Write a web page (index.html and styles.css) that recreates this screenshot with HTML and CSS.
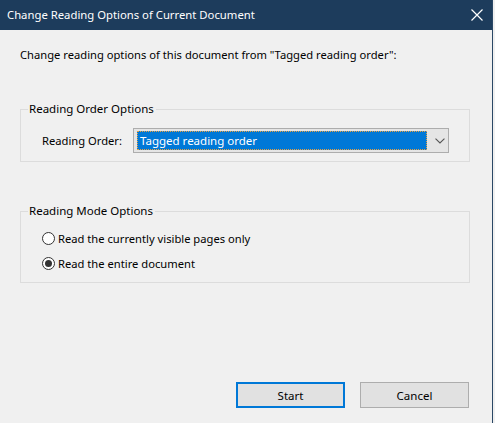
FILE: index.html
```html
<!DOCTYPE html>
<html>
<head>
<meta charset="utf-8">
<link rel="stylesheet" href="styles.css">
</head>
<body>
<div class="window">
  <div class="titlebar">
    <span class="title">Change Reading Options of Current Document</span>
    <svg class="close" width="12" height="12" viewBox="0 0 12 12"><path d="M0.5 0.5 L11.5 11.5 M11.5 0.5 L0.5 11.5" stroke="#fff" stroke-width="1.2" fill="none"/></svg>
  </div>
  <div class="content">
    <p class="intro">Change reading options of this document from "Tagged reading order":</p>
    <div class="group group-order">
      <span class="legend">Reading Order Options</span>
      <div class="row">
        <span class="label">Reading Order:</span>
        <div class="select">
          <div class="selected"><span>Tagged reading order</span></div>
          <svg class="chev" width="10" height="6" viewBox="0 0 10 6"><path d="M0.5 0.5 L5 5 L9.5 0.5" stroke="#555" stroke-width="1.1" fill="none"/></svg>
        </div>
      </div>
    </div>
    <div class="group group-mode">
      <span class="legend">Reading Mode Options</span>
      <label class="radio first"><span class="dot"></span>Read the currently visible pages only</label>
      <label class="radio"><span class="dot checked"></span>Read the entire document</label>
    </div>
    <div class="buttons">
      <button class="btn primary">Start</button>
      <button class="btn">Cancel</button>
    </div>
  </div>
</div>
</body>
</html>
```

FILE: styles.css
```css
html, body {
  margin: 0;
  padding: 0;
  background: #f0f0f0;
}
body {
  font-family: "Noto Sans", "Open Sans", sans-serif;
  font-size: 11.2px;
  color: #000;
}
.window {
  width: 492px;
  height: 423px;
  border-right: 1px solid #2a4866;
  background: #f0f0f0;
  display: flex;
  flex-direction: column;
}
.titlebar {
  height: 30px;
  flex: none;
  background: #1d3c5c;
  display: flex;
  align-items: center;
  justify-content: space-between;
  padding: 0 9px 0 7px;
  color: #fff;
}
.title {
  font-size: 11.3px;
  position: relative;
  top: -1px;
}
.close {
  position: relative;
  top: 0px;
}
.content {
  padding: 0 22px 0 20px;
  display: flex;
  flex-direction: column;
}
.intro {
  margin: 17px 0 0 0;
  line-height: 16px;
}
.group {
  position: relative;
  border: 1px solid #dcdcdc;
  box-sizing: border-box;
}
.legend {
  position: absolute;
  top: -9px;
  left: 7px;
  padding: 0 2px 0 1px;
  line-height: 16px;
  background: #f0f0f0;
  font-size: 11.5px;
}
.group-order {
  margin-top: 46px;
  height: 53px;
}
.row {
  display: flex;
  align-items: center;
  margin-top: 18px;
  padding-left: 21px;
}
.label {
  width: 91px;
}
.select {
  width: 316px;
  height: 25px;
  border: 1px solid #adadad;
  background: #e5e5e5;
  display: flex;
  align-items: center;
  padding: 0 3px;
  box-sizing: border-box;
}
.selected {
  width: 292px;
  height: 19px;
  background: #0078d7;
  color: #fff;
  border: 1px dotted #e8a040;
  box-sizing: border-box;
  display: flex;
  align-items: center;
  padding-left: 2px;
  font-size: 11.5px;
}
.chev {
  margin-left: 8px;
}
.group-mode {
  margin-top: 49px;
  height: 72px;
}
.radio {
  display: flex;
  align-items: center;
  margin-left: 21px;
  height: 16px;
  gap: 3px;
}
.radio.first {
  margin-top: 18px;
}
.radio + .radio {
  margin-top: 9px;
}
.dot {
  width: 13px;
  height: 13px;
  border: 1px solid #333;
  border-radius: 50%;
  box-sizing: border-box;
  background: #fff;
  display: flex;
  align-items: center;
  justify-content: center;
}
.dot.checked::after {
  content: "";
  width: 7px;
  height: 7px;
  border-radius: 50%;
  background: #333;
}
.buttons {
  display: flex;
  justify-content: flex-end;
  gap: 15px;
  margin-top: 99px;
  padding-right: 1px;
}
.btn {
  width: 109px;
  height: 26px;
  font-family: inherit;
  font-size: 11.5px;
  background: #e1e1e1;
  border: 1px solid #adadad;
  color: #000;
  padding: 0;
  margin: 0;
}
.btn.primary {
  border: 2px solid #0078d7;
}
```
